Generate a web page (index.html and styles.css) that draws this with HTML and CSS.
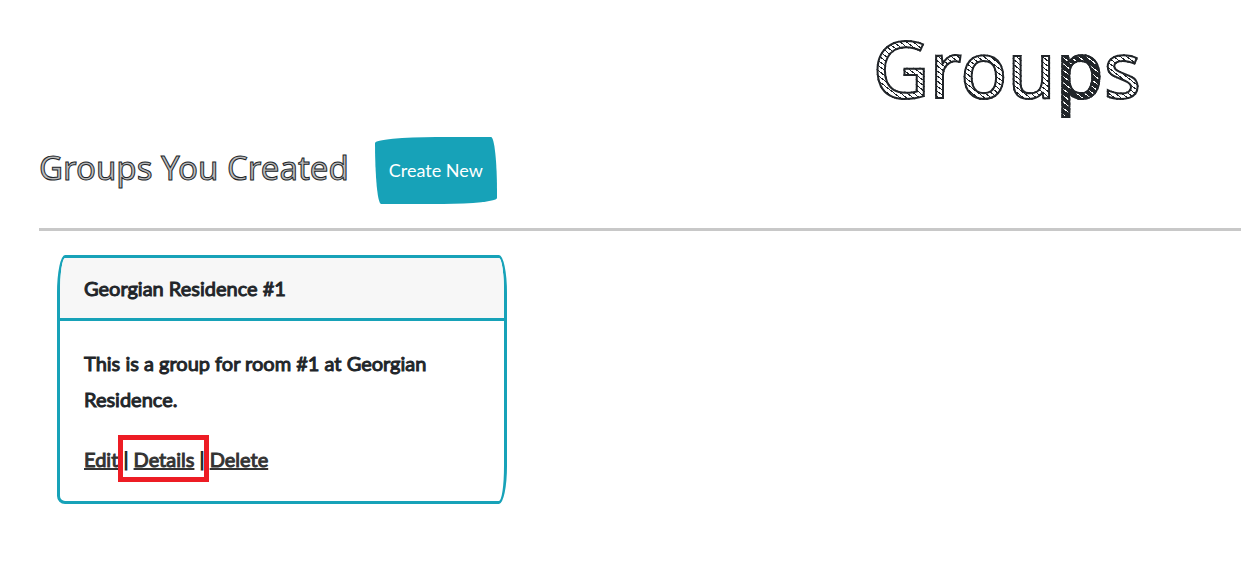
FILE: index.html
```
<!DOCTYPE html>
<html lang="en">
<head>
<meta charset="utf-8">
<meta name="viewport" content="width=device-width, initial-scale=1">
<title>Groups</title>
<link rel="stylesheet" href="styles.css">
</head>
<body>
<main class="page">
  <h1 class="title sketch">Grou<span class="dense">p</span>s</h1>
  <div class="section-head">
    <h2 class="subtitle sketch-small">Groups You Created</h2>
    <button class="create" type="button">Create New</button>
  </div>
  <hr class="rule">
  <article class="card">
    <header class="card-header">Georgian Residence #1</header>
    <div class="card-body">
      <p class="text">This is a group for room #1 at Georgian Residence.</p>
      <nav class="actions">
        <a href="#edit">Edit</a> | <span class="marked"><a href="#details">Details</a></span> | <a href="#delete">Delete</a>
      </nav>
    </div>
  </article>
</main>
</body>
</html>
```
FILE: styles.css
```
* { box-sizing: border-box; }
body {
  margin: 0;
  background: #fff;
  color: #212529;
  font: 20px/36px Lato, sans-serif;
}
.page { padding: 20px 0 24px 39px; }
.title {
  margin: 0 100px 21px 0;
  text-align: right;
  font: 400 78px/96px "Noto Sans", sans-serif;
}
.sketch {
  color: transparent;
  -webkit-text-stroke: 2px #212529;
  background: repeating-linear-gradient(38deg, #212529 0 1px, #fff 1px 4px);
  -webkit-background-clip: text;
  background-clip: text;
}
.dense {
  background: repeating-linear-gradient(38deg, #212529 0 4px, #fff 4px 5px);
  -webkit-background-clip: text;
  background-clip: text;
}
.section-head { display: flex; align-items: center; gap: 26px; }
.subtitle {
  margin: 0;
  padding-bottom: 6px;
  font: 400 33px/40px "Noto Sans", sans-serif;
}
.sketch-small {
  color: #bbb;
  -webkit-text-stroke: 1px #212529;
}
.create {
  padding: 16px 14px;
  border: 0;
  border-radius: 255px 25px 225px 25px / 25px 225px 25px 255px;
  background: #17a2b8;
  color: #fff;
  font: 18px/35px Lato, sans-serif;
}
.rule { margin: 24px 0; border: 0; border-top: 3px solid #c8c8c8; }
.card {
  max-width: 450px;
  margin: 0 18px;
  overflow: hidden;
  border: 3px solid #17a2b8;
  border-radius: 8px 8px 8px 8px / 38px 38px 38px 8px;
}
.card-header {
  padding: 12px 24px;
  border-bottom: 3px solid #17a2b8;
  background: #f7f7f7;
}
.card-header, .card-body { -webkit-text-stroke: 1px currentColor; }
.card-body { padding: 24px; }
.text { margin: 0 0 24px; }
.actions a { color: #333; text-decoration: underline; text-decoration-thickness: 2px; }
.marked { position: relative; display: inline-block; }
.marked::after {
  content: "";
  position: absolute;
  inset: -6px -15px -5px -16px;
  border: 5px solid #ed1c24;
  pointer-events: none;
}
```
